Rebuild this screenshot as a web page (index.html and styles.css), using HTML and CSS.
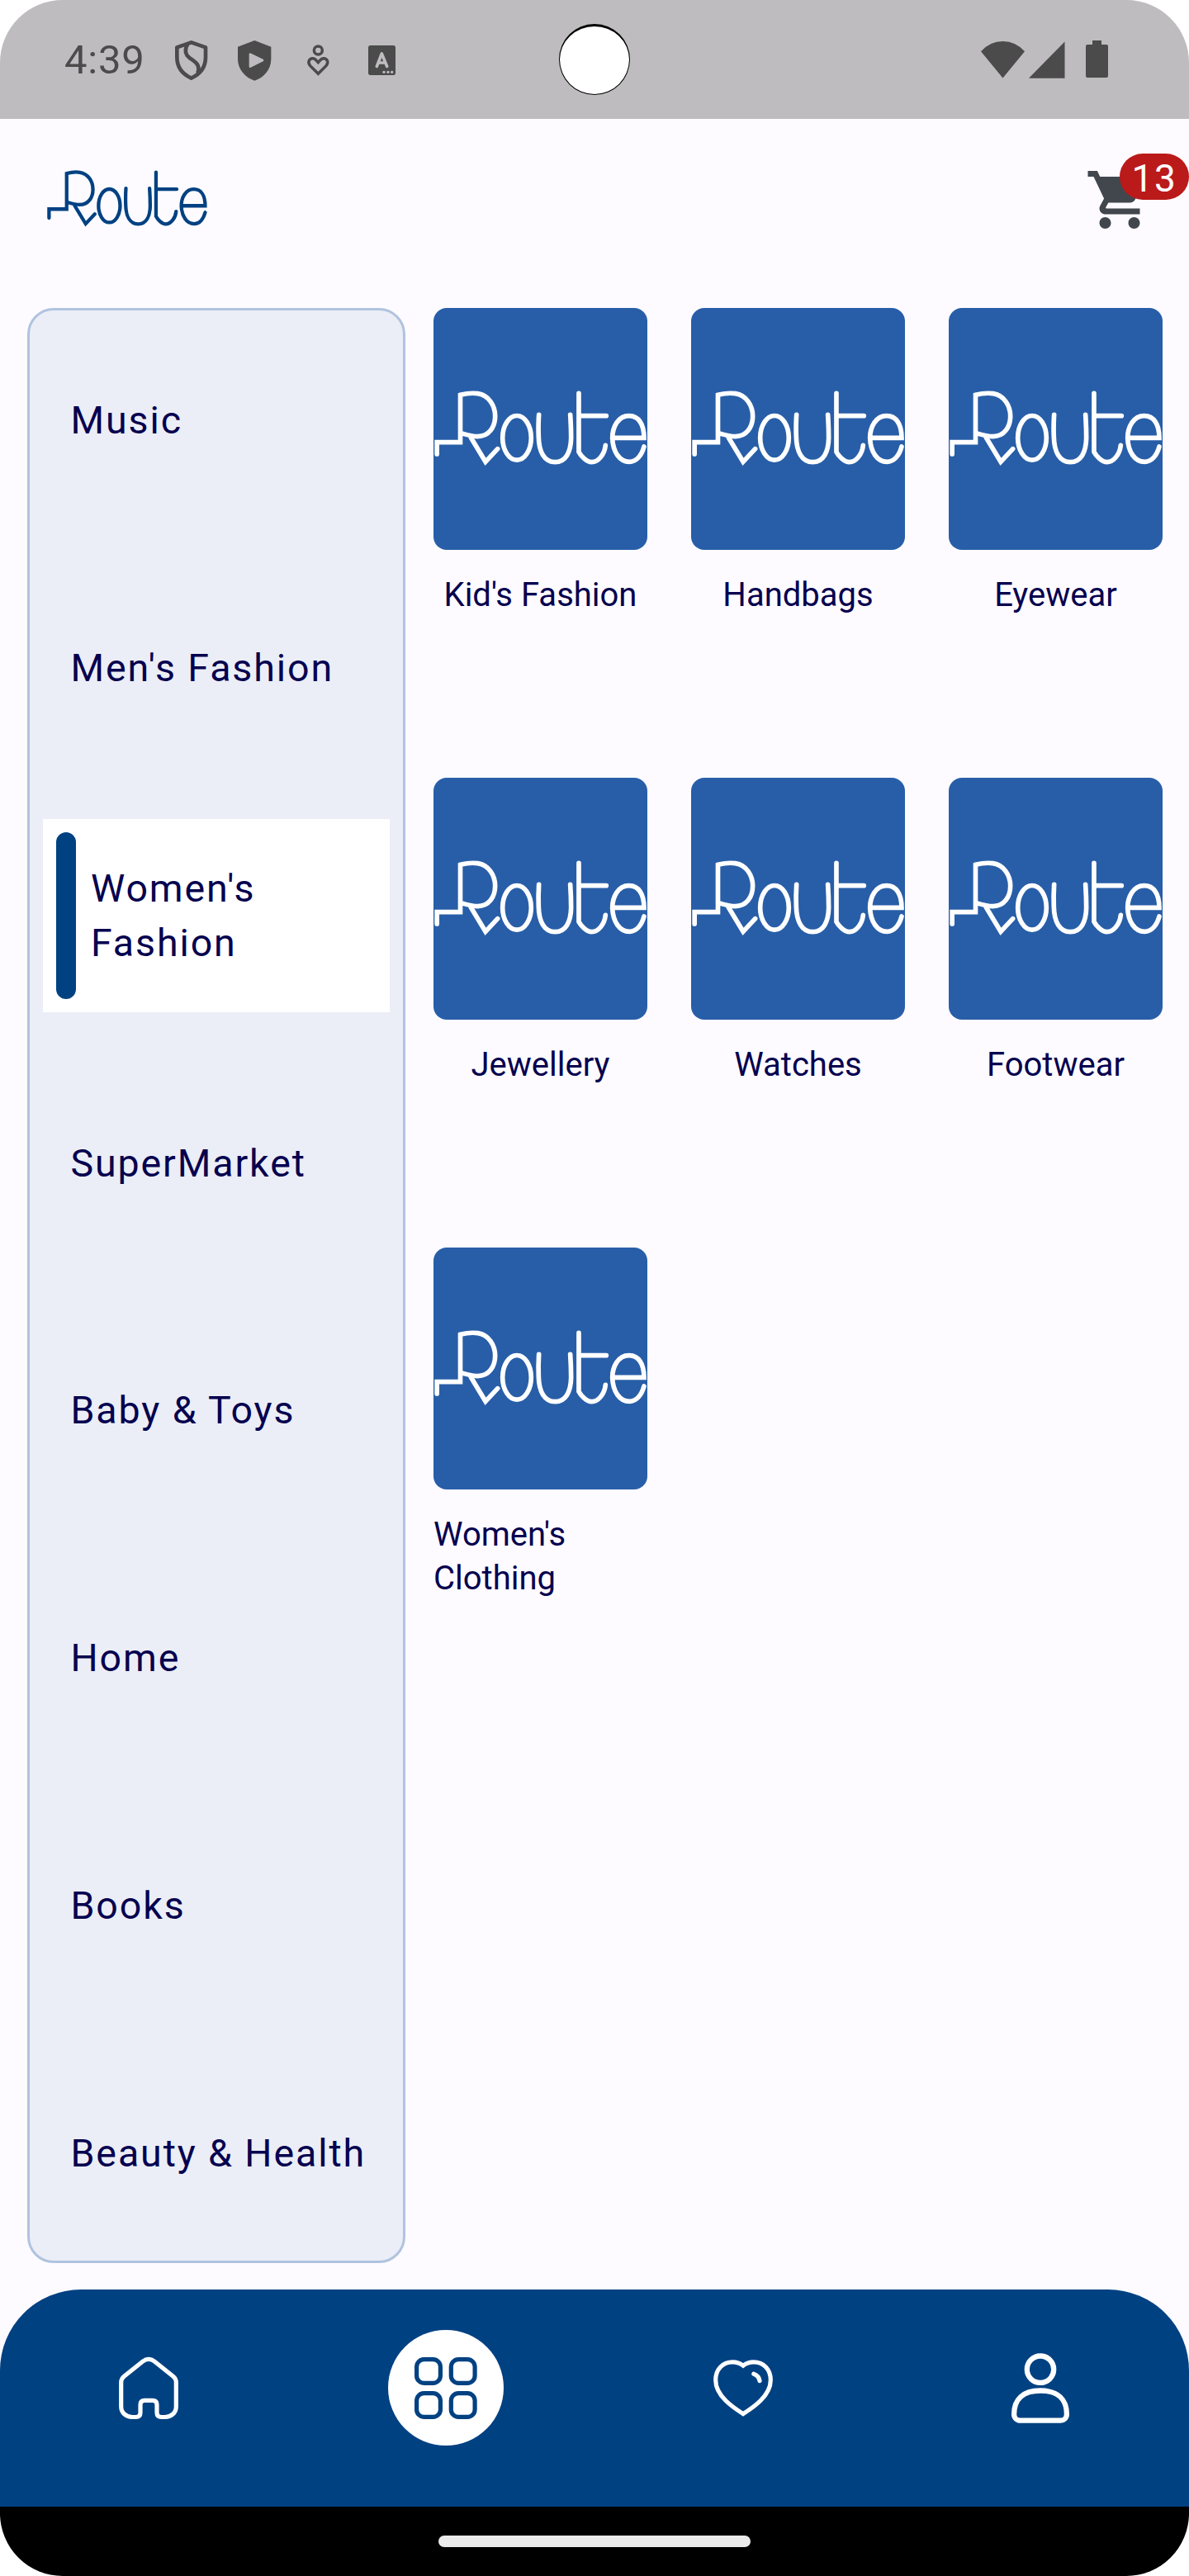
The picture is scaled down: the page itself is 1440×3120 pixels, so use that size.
FILE: index.html
```html
<!DOCTYPE html>
<html lang="en">
<head>
<meta charset="utf-8">
<title>Route – Categories</title>
<link rel="stylesheet" href="styles.css">
</head>
<body>
<svg class="defs" width="0" height="0" aria-hidden="true">
  <symbol id="brand" viewBox="47 337 772 276">
    <g fill="none" stroke="currentColor" stroke-width="17" stroke-linecap="round" stroke-miterlimit="8">
      <path d="M56.500 568V525H141.500V353C165 347 192 346 205 348C245 354 268 392 268 430C268 470 245 504 205 504C185 504 165 498 148 493"/>
      <path d="M180 508L233 596L277 549"/>
      <ellipse cx="347" cy="509" rx="52" ry="80.500"/>
      <path d="M427 425C425 455 425 480 426 505C427 560 447 597 486 597C525 597 543 560 544 510C544 480 543 455 541 425"/>
      <path d="M572 347V560C580 575 600 597 619 597C642 597 666 570 669 536M572 429H672"/>
      <path d="M704 509H809C809 460 790 429 754 429C715 429 694 470 694 510C696 560 720 596 756 596C780 596 800 575 809 541"/>
    </g>
  </symbol>
</svg>
<div class="phone">
  <header class="status">
    <span class="time">4:39</span>
    <svg class="st-shield" viewBox="633 144 123 150"><g fill="none" stroke="#4b4b4b" stroke-width="14" stroke-linejoin="round"><path d="M695 154L747 172V208C747 244 726 270 695 284C664 270 643 244 643 208V172Z"/><path d="M683 158C674 172 672 188 679 200C688 214 712 222 719 238C724 250 722 258 718 266"/></g></svg>
    <svg class="st-play" viewBox="861 144 129 150"><path fill="#4b4b4b" d="M925 147L985 170V215C985 252 958 282 925 293C892 282 864 252 864 215V170Z"/><path fill="#bebcbf" stroke="#bebcbf" stroke-width="8" stroke-linejoin="round" d="M909 197V242L954 219Z"/></svg>
    <svg class="st-care" viewBox="1113 144 87 150"><g fill="none" stroke="#4b4b4b" stroke-width="10.500"><circle cx="1156" cy="183" r="15"/><path d="M1156 268L1127 239C1116 226 1124 212 1136 212C1146 212 1150 220 1156 227C1162 220 1166 212 1176 212C1188 212 1196 226 1185 239Z"/></g></svg>
    <svg class="st-lang" viewBox="1335 144 105 150"><rect x="1338" y="165" width="99" height="108" rx="8" fill="#4b4b4b"/><path fill="none" stroke="#bebcbf" stroke-width="11" stroke-linecap="round" stroke-linejoin="round" d="M1369 241L1387 195L1406 241M1376 228H1400"/><g fill="#bebcbf"><circle cx="1395" cy="262" r="5"/><circle cx="1410" cy="262" r="5"/><circle cx="1424" cy="262" r="5"/></g></svg>
    <svg class="st-right" viewBox="1188 48 154 50"><g fill="#4b4b4b"><path d="M1188 62.300Q1199 50 1214.500 50T1241 62.300L1214.500 94.500Z"/><path d="M1289.500 50.500V94.700H1246Z"/><path d="M1323 49H1334V54H1340Q1342 54 1342 56V92Q1342 94 1340 94H1317Q1315 94 1315 92V56Q1315 54 1317 54H1323Z"/></g></svg>
    <i class="camera"></i>
  </header>

  <div class="topbar">
    <svg class="logo" role="img" aria-label="Route"><use href="#brand"/></svg>
    <div class="cart">
      <svg viewBox="0 0 24 24"><path d="M7 18c-1.100 0-1.990.9-1.990 2S5.900 22 7 22s2-.9 2-2-.9-2-2-2zM1 2v2h2l3.600 7.590-1.350 2.450c-.16.280-.25.610-.25.960 0 1.100.9 2 2 2h12v-2H7.420c-.14 0-.25-.11-.25-.25l.03-.12.900-1.630h7.450c.75 0 1.410-.41 1.750-1.030l3.580-6.490c.08-.14.120-.31.120-.48 0-.55-.45-1-1-1H5.210l-.94-2H1zm16 16c-1.100 0-1.990.9-1.990 2s.89 2 1.990 2 2-.9 2-2-.9-2-2-2z"/></svg>
      <span class="badge">13</span>
    </div>
  </div>

  <main class="content">
    <nav class="sidebar">
      <div class="item">Music</div>
      <div class="item">Men's Fashion</div>
      <div class="item active"><i class="marker"></i><span>Women's Fashion</span></div>
      <div class="item">SuperMarket</div>
      <div class="item">Baby &amp; Toys</div>
      <div class="item">Home</div>
      <div class="item">Books</div>
      <div class="item">Beauty &amp; Health</div>
    </nav>
    <section class="grid">
      <div class="card"><div class="tile"><svg role="img" aria-label="Route"><use href="#brand"/></svg></div><span>Kid's Fashion</span></div>
      <div class="card"><div class="tile"><svg role="img" aria-label="Route"><use href="#brand"/></svg></div><span>Handbags</span></div>
      <div class="card"><div class="tile"><svg role="img" aria-label="Route"><use href="#brand"/></svg></div><span>Eyewear</span></div>
      <div class="card"><div class="tile"><svg role="img" aria-label="Route"><use href="#brand"/></svg></div><span>Jewellery</span></div>
      <div class="card"><div class="tile"><svg role="img" aria-label="Route"><use href="#brand"/></svg></div><span>Watches</span></div>
      <div class="card"><div class="tile"><svg role="img" aria-label="Route"><use href="#brand"/></svg></div><span>Footwear</span></div>
      <div class="card"><div class="tile"><svg role="img" aria-label="Route"><use href="#brand"/></svg></div><span>Women's Clothing</span></div>
    </section>
  </main>

  <footer class="tabs">
    <div class="tab"><svg viewBox="0 0 84 84"><path stroke-width="5.200" d="M8.700 65V35.500C8.700 32.500 10 30 12.200 28.200L35 10C39.500 6.600 44.500 6.600 49 10L71.800 28.200C74 30 75.300 32.500 75.300 35.500V65C75.300 72.500 69 77.500 62 77.500H57.500C54 77.500 52 75.500 52 72V62.500C52 59 50 57.300 46.800 57.300H37.200C34 57.300 32 59 32 62.500V72C32 75.500 30 77.500 26.500 77.500H22C15 77.500 8.700 72.500 8.700 65Z"/></svg></div>
    <div class="tab on"><svg viewBox="0 0 84 84"><g stroke-width="5.200"><rect x="6.600" y="7.600" width="28.800" height="28.800" rx="9"/><rect x="48.300" y="7.600" width="28.800" height="28.800" rx="9"/><rect x="6.600" y="48.600" width="28.800" height="28.800" rx="9"/><rect x="48.300" y="48.600" width="28.800" height="28.800" rx="9"/></g></svg></div>
    <div class="tab"><svg viewBox="0 0 84 84"><g stroke-width="5.200"><path d="M42 73.600C30 66 8.700 52 8.700 32.700C8.700 20 17 10.900 29.300 10.900C34 10.900 38.500 12.500 42 15.200C45.500 12.500 50 10.900 54.700 10.900C67 10.900 75.300 20 75.300 32.700C75.300 52 54 66 42 73.600Z"/><path stroke-linecap="round" d="M54.800 25.200C58.500 26.500 61.500 30 62 33.700"/></g></svg></div>
    <div class="tab"><svg viewBox="0 0 84 84"><g stroke-width="6.300"><circle cx="42" cy="19.700" r="16.200"/><path d="M10.100 74C10.100 56 21 45.500 42 45.500S73.900 56 73.900 74C73.900 78.500 70.500 81.700 66.500 81.700H17.500C13.500 81.700 10.100 78.500 10.100 74Z"/></g></svg></div>
  </footer>
  <div class="gesture"><i></i></div>
</div>
</body>
</html>
```
FILE: styles.css
```css
* { box-sizing: border-box; }
body { margin: 0; background: #fff; font-family: Roboto, "Liberation Sans", sans-serif; color: #06004f; }
svg { display: block; flex: none; }
.defs { position: absolute; }
.phone { width: 1440px; height: 3120px; display: flex; flex-direction: column; background: #fdfbff; border-radius: 76px; overflow: hidden; }

.status { position: relative; height: 144px; flex: none; background: #bebcbf; display: flex; align-items: center; padding: 2px 98px 0 78px; }
.status svg { height: 50px; }
.time { width: 133px; font-size: 49px; line-height: 50px; letter-spacing: 0.800px; color: #4b4b4b; }
.st-shield { width: 41px; }
.st-play { width: 43px; margin-left: 35px; }
.st-care { width: 29px; margin-left: 41px; }
.st-lang { width: 35px; margin-left: 45px; }
.st-right { width: 154px; margin-left: auto; }
.camera { position: absolute; left: 677px; top: 29px; width: 86px; height: 86px; border-radius: 50%; border: 1.500px solid #000; border-top-width: 3px; background: #fff; }

.topbar { height: 229px; flex: none; display: flex; justify-content: space-between; align-items: flex-start; }
.logo { width: 194px; height: 69.400px; margin: 62px 0 0 56.500px; color: #004182; }
.cart { position: relative; width: 126.500px; padding-top: 56px; }
.cart svg { width: 84px; height: 84px; fill: #42474e; }
.badge { position: absolute; right: 0; top: 42px; width: 84px; height: 56px; border-radius: 28px; background: #ba1a1a; color: #fff; font-size: 46px; line-height: 60px; letter-spacing: 1.700px; text-align: center; }

.content { flex: none; height: 2400px; display: flex; padding: 0 32px 32px 33px; gap: 34px; }
.sidebar { width: 458px; height: 2368px; border: 3px solid #b0c3e0; border-radius: 32px; background: #ebeef6; padding: 16px; display: flex; flex-direction: column; gap: 65.200px; }
.item { height: 234.600px; flex: none; display: flex; align-items: center; padding-left: 33.500px; font-size: 46.500px; line-height: 66px; letter-spacing: 1.900px; white-space: nowrap; }
.item.active { background: #fff; padding: 16px; gap: 18px; margin-right: 0.500px; white-space: normal; }
.marker { width: 24px; height: 202px; border-radius: 12px; background: #004182; flex: none; }
.grid { width: 883px; display: grid; grid-template-columns: repeat(3, 259px); grid-auto-rows: 569px; column-gap: 53px; align-content: start; }
.card { display: flex; flex-direction: column; align-items: center; gap: 28px; font-size: 40px; line-height: 53px; }
.tile { width: 259px; height: 293px; border-radius: 16px; background: #285ea8; color: #fff; display: flex; align-items: center; justify-content: center; padding-bottom: 2px; }
.tile svg { width: 257.300px; height: 92px; }

.tabs { height: 263px; flex: none; background: #004182; border-radius: 98px 98px 0 0; display: grid; grid-template-columns: repeat(4, 1fr); padding-top: 49px; justify-items: center; align-items: start; }
.tab { width: 140px; height: 140px; border-radius: 50%; display: grid; place-items: center; color: #fff; }
.tab.on { background: #fff; color: #004182; }
.tab svg { width: 84px; height: 84px; fill: none; stroke: currentColor; overflow: visible; }
.gesture { height: 84px; flex: none; background: #000; padding-top: 35px; }
.gesture i { display: block; width: 378px; height: 14px; margin: 0 auto; border-radius: 7px; background: #ebebeb; }
```
